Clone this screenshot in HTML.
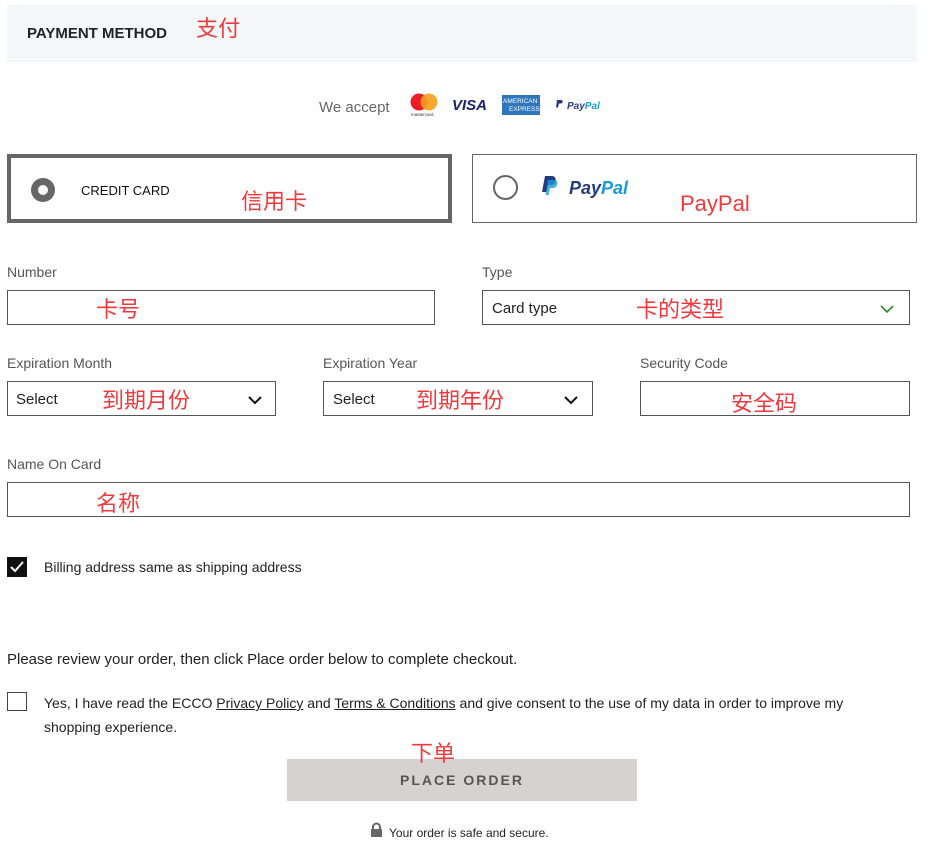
<!DOCTYPE html>
<html><head><meta charset="utf-8"><style>
body{margin:0;width:929px;height:843px;background:#fff;position:relative;font-family:"Liberation Sans","Noto Sans CJK SC",sans-serif;overflow:hidden}
.a{position:absolute;white-space:nowrap}
.r{position:absolute;color:#f0393c;font-size:22px;font-family:"Noto Sans CJK SC",sans-serif;line-height:1;white-space:nowrap}
.lbl{position:absolute;font-size:14px;color:#555;line-height:1}
.box{position:absolute;border:1px solid #555;box-sizing:border-box;height:35px}
.sel{position:absolute;font-size:15px;color:#222;line-height:1}
</style></head><body>
<div class="a" style="left:7px;top:5px;width:910px;height:57px;background:#f5f6f8"></div>
<div class="a" style="left:27px;top:25px;font-size:15px;font-weight:bold;color:#222">PAYMENT METHOD</div>
<div class="r" style="left:196px;top:16px">支付</div>

<div class="a" style="left:319px;top:99px;font-size:15px;color:#666">We accept</div>
<svg class="a" style="left:408px;top:92px" width="200" height="26">
<circle cx="11" cy="10" r="8.5" fill="#eb1c26"/><circle cx="21" cy="10" r="8.5" fill="#f79e1b" opacity=".9"/>
<text x="3" y="24" font-size="4.5" fill="#333" font-family="Liberation Sans">mastercard</text>
<text x="44" y="18" font-size="15" font-weight="bold" font-style="italic" fill="#1a1f71" font-family="Liberation Sans">VISA</text>
<rect x="94" y="3" width="38" height="20" fill="#2e77bc"/>
<text x="95" y="11" font-size="6.5" fill="#fff" font-family="Liberation Sans">AMERICAN</text>
<text x="101" y="19" font-size="6.5" fill="#fff" font-family="Liberation Sans">EXPRESS</text>
<path d="M149 8h4c2 0 2.5 3 0 3.5h-2l-1 4h-2z" fill="#253b80"/>
<text x="159" y="17" font-size="10" font-weight="bold" font-style="italic" fill="#253b80" font-family="Liberation Sans">Pay<tspan fill="#179bd7">Pal</tspan></text>
</svg>

<div class="a" style="left:7px;top:154px;width:445px;height:69px;border:4px solid #666;box-sizing:border-box"></div>
<div class="a" style="left:31px;top:178px;width:24px;height:24px;border-radius:50%;border:7px solid #666;box-sizing:border-box"></div>
<div class="a" style="left:81px;top:183px;font-size:13px;color:#111">CREDIT CARD</div>
<div class="r" style="left:241px;top:189px">信用卡</div>

<div class="a" style="left:472px;top:154px;width:445px;height:69px;border:1px solid #666;box-sizing:border-box"></div>
<div class="a" style="left:493px;top:175px;width:25px;height:25px;border-radius:50%;border:2px solid #666;box-sizing:border-box"></div>
<svg class="a" style="left:542px;top:175px" width="95" height="25">
<path d="M3 1h7c5 0 5 8 0 9h-4l-1.5 7h-4.5z" fill="#253b80"/><path d="M6 5h7c4 0 3 8-2 8h-3l-1.5 7h-3z" fill="#179bd7" opacity=".8"/>
<text x="27" y="19" font-size="18" font-weight="bold" font-style="italic" fill="#253b80" font-family="Liberation Sans">Pay<tspan fill="#179bd7">Pal</tspan></text>
</svg>
<div class="a" style="left:680px;top:191px;font-size:22px;color:#f0393c">PayPal</div>

<div class="lbl" style="left:7px;top:265px">Number</div>
<div class="box" style="left:7px;top:290px;width:428px"></div>
<div class="r" style="left:96px;top:297px">卡号</div>
<div class="lbl" style="left:482px;top:265px">Type</div>
<div class="box" style="left:482px;top:290px;width:428px"></div>
<div class="sel" style="left:492px;top:301px">Card type</div>
<div class="r" style="left:636px;top:297px">卡的类型</div>
<svg class="a" style="left:880px;top:304px" width="14" height="10"><path d="M1 2l6 6 6-6" fill="none" stroke="#2a8a2a" stroke-width="1.6"/></svg>

<div class="lbl" style="left:7px;top:356px">Expiration Month</div>
<div class="box" style="left:7px;top:381px;width:269px"></div>
<div class="sel" style="left:16px;top:392px">Select</div>
<div class="r" style="left:102px;top:388px">到期月份</div>
<svg class="a" style="left:247px;top:395px" width="16" height="10"><path d="M2 2l6 6 6-6" fill="none" stroke="#111" stroke-width="2"/></svg>

<div class="lbl" style="left:323px;top:356px">Expiration Year</div>
<div class="box" style="left:323px;top:381px;width:270px"></div>
<div class="sel" style="left:333px;top:392px">Select</div>
<div class="r" style="left:416px;top:388px">到期年份</div>
<svg class="a" style="left:563px;top:395px" width="16" height="10"><path d="M2 2l6 6 6-6" fill="none" stroke="#111" stroke-width="2"/></svg>

<div class="lbl" style="left:640px;top:356px">Security Code</div>
<div class="box" style="left:640px;top:381px;width:270px"></div>
<div class="r" style="left:731px;top:391px">安全码</div>

<div class="lbl" style="left:7px;top:457px">Name On Card</div>
<div class="box" style="left:7px;top:482px;width:903px"></div>
<div class="r" style="left:96px;top:491px">名称</div>

<div class="a" style="left:7px;top:557px;width:20px;height:20px;background:#111"></div>
<svg class="a" style="left:7px;top:557px" width="20" height="20"><path d="M4 10l4 4 8-9" fill="none" stroke="#fff" stroke-width="2"/></svg>
<div class="a" style="left:44px;top:559px;font-size:14px;color:#222">Billing address same as shipping address</div>

<div class="a" style="left:7px;top:651px;font-size:15px;color:#222">Please review your order, then click Place order below to complete checkout.</div>
<div class="a" style="left:7px;top:692px;width:20px;height:19px;border:1px solid #444;box-sizing:border-box"></div>
<div class="a" style="left:44px;top:691px;font-size:14px;color:#222;line-height:24px;white-space:normal;width:830px">Yes, I have read the ECCO <u>Privacy Policy</u> and <u>Terms &amp; Conditions</u> and give consent to the use of my data in order to improve my shopping experience.</div>

<div class="a" style="left:287px;top:759px;width:350px;height:42px;background:#d6d2d2"></div>
<div class="r" style="left:411px;top:741px">下单</div>
<div class="a" style="left:287px;top:772px;width:350px;text-align:center;font-size:14px;font-weight:bold;color:#555;letter-spacing:2px">PLACE ORDER</div>
<svg class="a" style="left:370px;top:822px" width="13" height="16"><path d="M3 7V5a3.5 3.5 0 017 0v2" fill="none" stroke="#666" stroke-width="2"/><rect x="1" y="7" width="11" height="8" fill="#666"/></svg>
<div class="a" style="left:389px;top:826px;font-size:12px;color:#222">Your order is safe and secure.</div>
</body></html>
